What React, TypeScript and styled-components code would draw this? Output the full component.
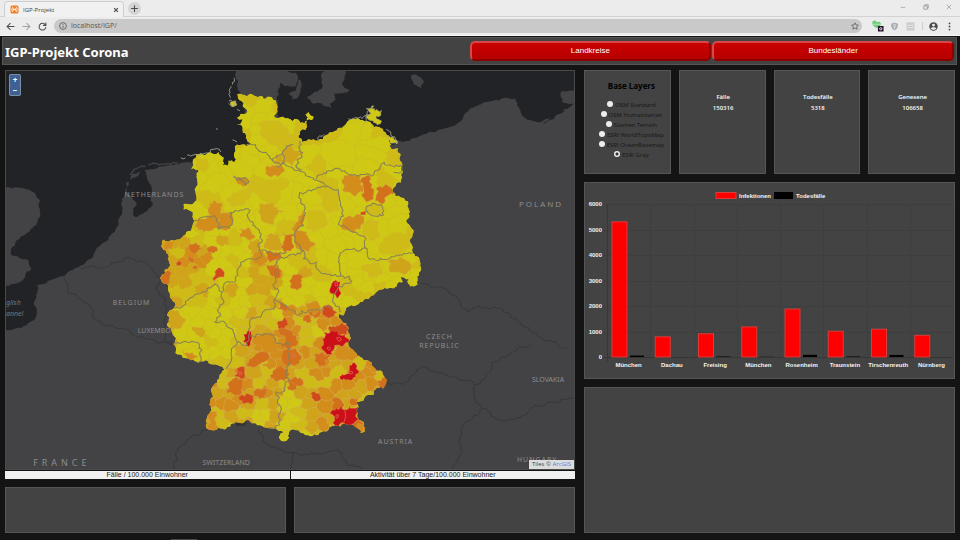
import React, { useState } from "react";
import styled, { createGlobalStyle, css } from "styled-components";

const Global = createGlobalStyle`
  * { box-sizing: border-box; }
  body { margin: 0; background: #141414; font-family: "Open Sans", "Noto Sans", sans-serif; }
  button, input { font: inherit; }
`;

/* ---------- geometry helpers for the map ---------- */

type Pt = [number, number];

const pts = (s: string): Pt[] =>
  s.trim().split(/\s+/).map((p) => p.split(",").map(Number) as Pt);

const noise = (a: number, b: number) => {
  const v = Math.sin(a * 12.9898 + b * 78.233) * 43758.5453;
  return v - Math.floor(v);
};

/* Splits an edge into small wobbling pieces; the same edge always gets the same wobble. */
const roughEdge = (a: Pt, b: Pt, amp: number, out: Pt[]) => {
  const len = Math.hypot(a[0] - b[0], a[1] - b[1]);
  if (len < 9) {
    out.push(b);
    return;
  }
  const n = noise(Math.round(a[0] + b[0]), Math.round(a[1] + b[1])) - 0.5;
  const dir = a[0] < b[0] || (a[0] === b[0] && a[1] < b[1]) ? 1 : -1;
  const k = n * dir * Math.min(amp, 12 / len);
  const m: Pt = [
    (a[0] + b[0]) / 2 - (b[1] - a[1]) * k,
    (a[1] + b[1]) / 2 + (b[0] - a[0]) * k,
  ];
  roughEdge(a, m, amp, out);
  roughEdge(m, b, amp, out);
};

const toPath = (points: Pt[], amp = 0.6, closed = true) => {
  const out: Pt[] = [points[0]];
  for (let i = 1; i < points.length; i++) roughEdge(points[i - 1], points[i], amp, out);
  if (closed) roughEdge(points[points.length - 1], points[0], amp, out);
  return "M" + out.map((p) => `${Math.round(p[0])},${Math.round(p[1])}`).join("L") + (closed ? "Z" : "");
};

const HEAT = ["#cfc814", "#cebb18", "#d0a41a", "#d38d1a", "#d2701c", "#d04a1c", "#cc101a"];

const GERMANY = pts(`641,84 655,86 690,90 712,98 722,92 745,103 750,120 748,140 740,150 765,152 790,165 805,160 812,170
 830,164 826,145 834,138 840,148 848,152 846,160 836,160 830,182 825,192 812,195 808,215 818,228 835,220 860,224 880,208
 905,195 925,185 940,166 975,162 995,166 1012,184 1030,186 1045,205 1055,232 1076,242 1083,285 1090,320 1085,350 1066,365
 1062,378 1085,395 1105,415 1103,460 1115,490 1110,530 1117,562 1133,575 1137,600 1130,645 1120,663 1104,655 1106,640
 1084,635 1090,650 1060,668 1035,672 1010,690 975,710 950,720 935,735 930,750 918,745 925,768 942,785 945,805 942,830
 945,845 965,865 995,885 1010,905 1040,935 1045,955 1038,970 1020,968 1010,990 985,1000 963,1010 970,1025 962,1038
 968,1058 985,1078 987,1100 975,1104 966,1090 955,1080 920,1085 890,1088 868,1102 850,1108 838,1114 820,1105 800,1096
 784,1097 782,1118 765,1130 754,1114 766,1102 745,1090 715,1088 690,1075 672,1066 650,1080 630,1075 610,1092 590,1088
 570,1096 557,1090 558,1060 565,1020 572,985 580,955 592,935 606,914 600,905 575,898 555,885 535,893 515,885 490,870
 468,838 475,820 462,795 450,775 450,750 458,735 470,725 462,700 455,680 448,655 430,637 445,622 455,605 452,580 447,555
 437,535 440,522 470,525 495,510 515,495 524,466 520,440 495,432 495,415 520,415 530,400 525,370 530,335 535,312
 516,310 520,285 528,265 560,262 590,258 604,275 601,298 614,300 617,284 632,290 635,250 640,236 665,240 678,234 664,215 655,185
 640,175 655,160 640,155 665,142 655,120 652,105`);

const LAND = [
  `-40,795 13,794 40,790 70,780 88,765 97,740 95,700 97,660 130,645 170,632 210,605 245,580 262,545 290,525 300,505 318,470 330,430
   335,390 340,350 355,325 375,318 395,312 430,302 480,295 515,290 560,300 700,300 690,200 648,100 640,60 643,5 780,5 765,40
   752,70 748,100 750,140 780,260 1000,270 1070,240 1060,230 1090,228 1120,215 1190,190 1240,170 1255,145 1285,122 1330,105
   1370,95 1395,97 1405,125 1412,145 1435,162 1470,164 1500,150 1525,130 1560,110 1600,110 1600,1300 -40,1300`,
  `-40,365 13,365 50,366 85,378 105,402 106,450 80,490 55,512 30,545 28,568 45,572 75,585 82,610 62,640 48,652 13,662 -40,662`,
  `1520,75 1600,78 1600,105 1522,108`,
  `752,30 770,12 800,20 805,45 795,62 770,60 755,48`,
  `830,92 870,68 868,30 885,8 935,8 925,55 945,72 905,82 908,100 892,112 898,128 870,112 845,112`,
  `780,82 800,72 808,40 815,60 806,95 790,100`,
  `1112,28 1125,25 1147,45 1140,68 1120,55`,
];
const LAKES = [
  `345,345 372,330 388,312 398,345 408,362 400,392 412,418 390,440 366,455 357,445 368,412 348,388`,
  `1470,175 1492,150 1530,130 1525,138 1500,158`,
  `1400,100 1412,98 1425,118 1430,128`,
];
const COUNTRY_LINES = [
  `170,632 180,680 240,720 262,765 320,790 380,815 465,838`,
  `215,608 270,605 310,590 345,575 390,590 420,625 432,637`,
  `432,637 420,670 445,700 450,750 442,790 450,830 468,838`,
  `557,1095 520,1110 480,1160 465,1216`,
  `700,1090 710,1130 750,1150 790,1165 830,1170 915,1155 935,1190 990,1216`,
  `790,1165 785,1216`,
  `1137,650 1180,665 1240,700 1265,740 1290,725 1340,725 1400,760 1440,800 1535,850`,
  `1045,955 1090,960 1135,910 1180,920 1240,940 1285,960 1340,890 1400,850 1440,840`,
  `1285,960 1285,1010 1305,1030 1250,1090 1245,1150 1225,1216`,
  `1305,1030 1360,1070 1420,1050 1450,1020 1554,1000`,
];

const STATE_LINES = [
  `665,238 690,236 710,260 730,278 748,290 765,290 790,305 810,312 840,335 860,345`,
  `812,225 808,245 818,260 805,280 800,300 815,312`,
  `735,285 748,268 762,264 768,290 745,300`,
  `762,264 775,240 792,235`,
  `855,340 890,315 920,310 965,330 1010,328 1040,290 1060,300 1085,298 1080,322 1065,320`,
  `860,345 885,362 915,372 920,420 925,440 920,480 955,500 990,520 993,550`,
  `885,362 845,372 810,380 812,410 825,430 820,480 798,500 805,535 820,555 820,580 855,590 862,615 895,630 918,632`,
  `918,632 915,590 920,562 945,552 993,550 1000,582 1040,582 1080,570 1117,562`,
  `918,632 945,632 950,650 925,665 900,700 905,715 920,740`,
  `820,555 775,575 748,585 750,610 745,630 740,655 750,670 742,700 755,710 790,735 808,750 815,735 850,735 875,725 900,728`,
  `524,466 545,455 580,450 590,490 620,488 628,465 622,440 650,433 675,435 672,460 690,485 705,520 700,555 745,570 775,560`,
  `702,560 705,575 680,580 650,590 640,620 630,650 605,655 600,680 580,655 555,680 510,700 495,720 470,728`,
  `600,680 605,710 590,730 595,750 580,770 610,775 630,800 640,830 655,840`,
  `742,700 740,730 710,740 705,755 675,765 675,800 668,840 655,840`,
  `640,830 625,850 625,885 610,912`,
  `468,838 500,828 525,830 545,855 535,890`,
  `675,812 690,816 700,806 740,808 750,835 775,830 780,870 775,910 782,945 770,965 760,985 745,980 755,1020 755,1080 725,1090`,
  `990,432 1008,412 1035,425 1037,448 1000,445 990,432`,
  `632,330 668,342 664,358 640,342 632,330`,
];

const ISLANDS = [
  `625,60 618,85 622,95`, `632,35 628,55`, `618,105 634,112 626,122 618,112`, `640,130 648,134`, `628,222 640,228`,
  `505,268 540,262 592,250`, `488,276 500,276`, `583,188 588,190`, `592,250 596,258`,
  `942,158 970,156 985,150 1000,150`, `985,170 1000,128 1012,120`,
  `1045,190 1060,212 1072,235`, `860,222 876,205`,
];
const DUTCH_ISLANDS = [`350,328 368,308 392,302`, `400,298 440,294 480,290`];
const RUEGEN = [
  `990,128 1008,118 1014,134 1032,132 1030,148 1018,150 1032,165 1020,176 1002,164 990,152 1004,142`,
  `1050,208 1064,214 1074,234 1054,230`,
  `622,108 636,104 640,116 628,122`,
];

/* Districts with a shape of their own: heat level, then outline. */
const DISTRICTS: [number, string][] = [
  [2, `770,240 790,236 800,255 818,262 806,282 790,300 768,290 762,265`],
  [2, `735,285 750,268 766,270 766,290 748,300`],
  [3, `722,300 760,298 768,318 750,334 725,330 718,312`],
  [3, `640,338 668,342 666,358 650,356`],
  [3, `565,412 580,404 598,412 594,440 605,445 590,462 592,492 560,496 525,480 540,460 566,450`],
  [3, `592,450 620,440 630,460 618,488 596,490`],
  [1, `700,170 740,165 775,185 790,210 765,230 720,215 700,200`],
  [1, `640,380 672,368 676,390 660,415 630,420 612,400`],
  [2, `700,418 740,415 765,440 745,450 738,476 712,468 698,440`],
  [3, `645,490 670,485 690,515 675,525 650,515`],
  [2, `672,528 695,520 700,555 680,565 670,545`],
  [2, `720,510 750,505 760,545 730,556 712,540`],
  [3, `815,440 826,450 822,480 800,500 785,490 800,470`],
  [3, `798,500 830,498 852,540 835,558 808,550 795,530`],
  [4, `765,500 792,505 795,545 770,560 758,545 768,525`],
  [4, `718,562 760,556 752,580 728,592`],
  [3, `685,562 712,558 718,590 700,600 684,590`],
  [4, `722,598 745,595 760,630 748,640 728,620`],
  [1, `880,375 915,376 918,430 895,440 870,415`],
  [1, `830,440 870,435 880,480 850,500 828,485`],
  [3, `930,330 975,332 982,380 960,392 930,378`],
  [4, `980,335 1000,330 1012,370 1010,400 990,408 978,385`],
  [4, `1018,370 1045,355 1068,372 1045,392 1035,415 1015,405`],
  [1, `990,430 1008,412 1035,425 1037,446 1005,445`],
  [3, `928,460 975,448 985,465 960,500 930,492`],
  [5, `975,440 990,435 988,448 976,448`],
  [1, `990,470 1020,465 1030,510 1000,520 980,500`],
  [1, `980,600 1020,590 1035,625 1000,635`],
  [2, `1050,590 1085,575 1112,600 1090,625 1055,620`],
  [4, `788,640 800,628 818,635 815,655 802,675 785,660`],
  [6, `897,655 908,644 920,650 922,682 910,698 895,685`],
  [4, `512,535 530,532 545,550 520,562`],
  [4, `558,548 585,545 588,556 564,560`],
  [4, `510,572 522,578 520,592 512,588`],
  [5, `477,590 487,588 486,600 478,600`],
  [4, `520,602 534,604 528,612 520,608`],
  [5, `585,612 596,608 606,622 604,635 590,636 580,650 574,640 582,628`],
  [4, `430,637 448,618 466,624 456,645 445,658`],
  [3, `440,524 468,530 462,552 448,556`],
  [4, `752,706 778,728 775,742 750,730`],
  [5, `752,768 770,755 780,780 768,795 752,780`],
  [4, `755,790 790,800 805,830 785,860 762,848 770,820`],
  [3, `828,712 862,714 872,735 845,748 828,735`],
  [5, `872,726 895,722 912,742 890,758 872,745`],
  [4, `822,752 846,756 840,770 820,768`],
  [6, `658,808 668,798 680,812 676,838 666,842 656,828`],
  [5, `892,782 925,772 944,792 938,808 900,805 890,795`],
  [6, `875,803 895,797 932,808 944,832 915,842 905,840 898,868 880,862 868,845 872,822`],
  [4, `850,868 875,862 895,872 880,898 860,902`],
  [3, `905,842 942,838 945,862 920,885 902,868`],
  [6, `945,900 962,897 970,918 962,935 940,943 920,942 918,935 935,928`],
  [4, `765,855 800,850 815,880 795,902 768,895`],
  [4, `690,868 722,855 735,875 705,895 678,905 665,895`],
  [5, `640,910 660,905 662,930 650,940 632,932`],
  [4, `630,940 658,948 650,975 640,990 615,985 618,965`],
  [4, `752,905 778,912 780,942 755,945 730,930`],
  [3, `690,808 740,808 750,835 745,865 710,850 680,840`],
  [5, `650,992 665,985 684,1000 678,1018 655,1015`],
  [4, `692,972 716,970 714,998 700,1004 684,990`],
  [4, `775,950 804,958 800,974 780,975`],
  [5, `840,985 862,984 868,1000 850,1008`],
  [4, `950,998 972,996 968,1018 950,1020`],
  [6, `890,1045 910,1030 925,1024 938,1035 945,1022 968,1026 965,1045 970,1062 950,1080 925,1072 905,1085 905,1060`],
  [3, `560,1042 588,1040 585,1075 565,1094`],
  [3, `968,1075 985,1080 986,1100 972,1100`],
  [3, `490,858 520,862 535,875 515,885`],
  [2, `450,742 480,735 500,760 480,790 462,792 450,775`],
];

/* Bavaria and the south-west are warmer, the Rhine-Ruhr a little. */
const baseHeat = (x: number, y: number) => {
  const r = noise(x * 1.3, y * 0.7);
  if (y > 1035 && x > 590 && x < 820) return r < 0.6 ? 0 : 1 + (r > 0.8 ? 1 : 0);
  if (x > 755 && x < 840 && y > 965) return r < 0.7 ? 0 : 2;
  if (x > 800 && x < 860 && y > 760 && y < 850) return r < 0.7 ? 1 : 0;
  if (y > 900 || (y > 830 && x > 640) || (y > 735 && x > 760)) return r < 0.15 ? 1 : r < 0.55 ? 2 : r < 0.92 ? 3 : 4;
  if (y > 500 && y < 730 && x < 570) return r < 0.3 ? 1 : r < 0.88 ? 2 : 3;
  if (y > 560 && x > 670 && x < 745) return r < 0.4 ? 1 : 2;
  if (y < 480 || x > 840) return r < 0.75 ? 0 : 1;
  return r < 0.62 ? 0 : r < 0.9 ? 1 : 2;
};

const buildCells = () => {
  const sites: Pt[] = [];
  for (let row = 0, y = 90; y < 1140; y += 31, row++)
    for (let x = 430 + (row % 2) * 17; x < 1145; x += 34) {
      const sparse = y < 480 || (x > 840 && y < 700);
      if (sparse && noise(x, y + 3) > 0.42) continue;
      sites.push([x + (noise(x, y) - 0.5) * 24, y + (noise(y, x) - 0.5) * 22]);
    }
  return sites.map((s) => {
    let cell: Pt[] = [[s[0] - 110, s[1] - 110], [s[0] + 110, s[1] - 110], [s[0] + 110, s[1] + 110], [s[0] - 110, s[1] + 110]];
    for (const o of sites) {
      const dx = o[0] - s[0];
      const dy = o[1] - s[1];
      if ((!dx && !dy) || Math.hypot(dx, dy) > 240) continue;
      const mid = (dx * (s[0] + o[0]) + dy * (s[1] + o[1])) / 2;
      const side = (p: Pt) => p[0] * dx + p[1] * dy - mid;
      const next: Pt[] = [];
      cell.forEach((p, i) => {
        const q = cell[(i + 1) % cell.length];
        const a = side(p);
        const b = side(q);
        if (a <= 0) next.push(p);
        if (a < 0 !== b < 0) next.push([p[0] + ((q[0] - p[0]) * a) / (a - b), p[1] + ((q[1] - p[1]) * a) / (a - b)]);
      });
      cell = next;
    }
    return { d: toPath(cell, 0.6), heat: baseHeat(s[0], s[1]), south: s[1] > 740 && (s[0] > 640 || s[1] > 900) };
  });
};

const CELLS = buildCells();
const GERMANY_PATH = toPath(GERMANY, 0.6);

const LABELS: [string, number, number, number, number][] = [
  ["NETHERLANDS", 154, 197, 7, 1],
  ["BELGIUM", 131, 306, 7, 1],
  ["POLAND", 542, 207, 8, 2],
  ["CZECH", 440, 340, 7, 1],
  ["REPUBLIC", 440, 349, 7, 1],
  ["SLOVAKIA", 549, 383, 7, 0],
  ["AUSTRIA", 396, 445, 7, 1],
  ["HUNGARY", 538, 463, 7, 1],
  ["SWITZERLAND", 226, 466, 7, 0],
  ["FRANCE", 61, 467, 9, 4],
];

const MapSvg = styled.svg`
  display: block;
  position: absolute;
  inset: 0;
  width: 100%;
  height: 100%;
  background: #222327;
`;
const Place = styled.text<{ $size: number; $space: number }>`
  font: ${(p) => p.$size}px "Noto Sans", sans-serif;
  letter-spacing: ${(p) => p.$space}px;
  fill: #8d8d8f;
  text-anchor: middle;
`;
const SeaName = styled.text`
  font: italic 7px "Noto Sans", sans-serif;
  fill: #77777a;
`;

const GermanyMap = () => (
  <MapSvg viewBox="5 70 570 401" preserveAspectRatio="xMidYMid slice" role="img" aria-label="Fälle pro Landkreis">
    <defs>
      <clipPath id="germany"><path d={GERMANY_PATH} /></clipPath>
    </defs>
    <g transform="translate(0 66) scale(0.37 0.33333)" strokeLinejoin="round">
      {LAND.map((l) => <path key={l} d={toPath(pts(l), 0.35)} fill="#434345" />)}
      {LAKES.map((l) => <path key={l} d={toPath(pts(l), 0.4)} fill="#222327" />)}
      {DUTCH_ISLANDS.map((l) => <path key={l} d={toPath(pts(l), 0.4, false)} fill="none" stroke="#434345" strokeWidth="4" />)}
      {COUNTRY_LINES.map((l) => (
        <path key={l} d={toPath(pts(l), 0.6, false)} fill="none" stroke="#39393c" strokeWidth="3" />
      ))}
    </g>
    <Place x={161} y={334} $size={7} $space={0}>LUXEMBOURG</Place>
    <g transform="translate(0 66) scale(0.37 0.33333)" strokeLinejoin="round">
      <g clipPath="url(#germany)">
        <path d={GERMANY_PATH} fill={HEAT[0]} />
        {CELLS.map((c, i) => (
          <path key={i} d={c.d} fill={HEAT[c.heat]} stroke={c.south ? "#d8ae68" : "#cdb838"} strokeOpacity={c.south ? 0.7 : 0.45} strokeWidth="1.5" />
        ))}
        {DISTRICTS.map(([h, l]) => (
          <path key={l} d={toPath(pts(l), 0.8)} fill={HEAT[h]} stroke="#d8a070" strokeOpacity="0.55" strokeWidth="1.5" />
        ))}
        <g fill="none" stroke="#e8705c" strokeWidth="2">
          <path d="M910,818l8,-2 6,8 -8,4zM884,848l6,-3 5,5 -6,5zM944,920l8,-2 2,7 -8,2zM905,652l6,-2 2,10 -6,2zM644,922l7,-3 3,7 -7,3zM788,868l8,-3 5,8 -8,5zM908,1052l6,-4 2,8 -6,4zM932,1032l3,22 -5,18" />
        </g>
      </g>
      {RUEGEN.map((l) => <path key={l} d={toPath(pts(l), 0.9)} fill={HEAT[0]} stroke="#aaa775" strokeWidth="1.5" />)}
      {STATE_LINES.map((l) => (
        <path key={l} d={toPath(pts(l), 0.7, false)} fill="none" stroke="#8a8256" strokeWidth="3" />
      ))}
      {ISLANDS.map((l) => <path key={l} d={toPath(pts(l), 0.7, false)} fill="none" stroke="#a3a38c" strokeWidth="2.5" />)}
      <path d="M668,1066l-12,10 -22,-4 6,12 22,-2z" fill="#343438" />
      <path d="M1054,238l22,-4 2,12 -18,4z" fill="#434345" />
    </g>
    {LABELS.map(([name, x, y, size, space]) => (
      <Place key={name} x={x} y={y} $size={size} $space={space}>{name}</Place>
    ))}
    <SeaName x={5} y={306}>glish</SeaName>
    <SeaName x={5} y={317}>annel</SeaName>
  </MapSvg>
);

/* ---------- browser frame ---------- */

const Shell = styled.div`
  display: flex;
  flex-direction: column;
  min-height: 100vh;
  background: #141414;
`;
const TabStrip = styled.div`
  display: flex;
  align-items: flex-end;
  height: 17px;
  padding-left: 4px;
  background: #ececec;
  border-bottom: 1px solid #d2d2d2;
`;
const Tab = styled.div`
  display: flex;
  align-items: center;
  gap: 4px;
  width: 120px;
  height: 16px;
  padding: 0 4px 0 5px;
  margin-bottom: -1px;
  background: #f1f1f1;
  border: 1px solid #cfcfcf;
  border-bottom: 0;
  border-radius: 4px 4px 0 0;
  font-size: 6px;
  color: #444;
  svg { width: 9px; height: 9px; }
`;
const Grow = styled.span`
  flex: 1;
`;
const IconButton = styled.button<{ $round?: boolean }>`
  display: flex;
  align-items: center;
  justify-content: center;
  flex: none;
  width: 13px;
  height: 13px;
  padding: 0;
  border: 0;
  border-radius: 50%;
  color: #4a4a4a;
  background: ${(p) => (p.$round ? "#d4d4d4" : "transparent")};
  svg { width: 9px; height: 9px; }
`;
const TabClose = styled(IconButton)`
  width: 7px;
  svg { width: 6px; height: 6px; }
`;
const NewTab = styled(IconButton)`
  margin: 0 0 1px 4px;
`;
const WindowButtons = styled.div`
  display: flex;
  align-self: flex-start;
  gap: 10px;
  padding-right: 5px;
  button { color: #858585; }
  svg { width: 6px; height: 6px; }
`;
const AddressBar = styled.div`
  display: flex;
  align-items: center;
  gap: 3px;
  height: 19px;
  padding: 0 4px;
  background: #ececec;
  border-bottom: 1px solid #f8f8f8;
`;
const Omnibox = styled.label`
  display: flex;
  align-items: center;
  flex: 1;
  gap: 4px;
  height: 14px;
  margin: 0 7px 0 2px;
  padding: 0 3px 0 5px;
  border-radius: 7px;
  background: #c9c9c9;
  color: #555;
  svg { width: 8px; height: 8px; }
`;
const UrlInput = styled.input`
  flex: 1;
  min-width: 0;
  padding: 0;
  border: 0;
  outline: 0;
  background: transparent;
  color: #555;
  font-size: 7px;
  line-height: 12px;
`;

const stroke = { fill: "none", stroke: "currentColor", strokeWidth: 1.8, viewBox: "0 0 16 16" } as const;

const BrowserFrame = () => (
  <>
    <TabStrip>
      <Tab>
        <svg viewBox="0 0 18 18">
          <rect x="1" y="1" width="16" height="16" rx="3" fill="#f27f22" />
          <path d="M6 4c-3 2-3 8 0 10M12 4c3 2 3 8 0 10M5 6l8 6M13 6l-8 6M6 9h6" stroke="#fff" strokeWidth="1.6" fill="none" />
        </svg>
        IGP-Projekt
        <Grow />
        <TabClose aria-label="Tab schließen">
          <svg {...stroke} strokeWidth={3}><path d="M3 3l10 10M13 3L3 13" /></svg>
        </TabClose>
      </Tab>
      <NewTab $round aria-label="Neuer Tab"><svg {...stroke}><path d="M8 2v12M2 8h12" /></svg></NewTab>
      <Grow />
      <WindowButtons>
        <IconButton aria-label="Minimieren"><svg {...stroke} strokeWidth={1.5}><path d="M2 9h12" /></svg></IconButton>
        <IconButton aria-label="Verkleinern"><svg {...stroke} strokeWidth={1.8}><path d="M2 5h9v9H2zM5 5V2h9v9h-3" /></svg></IconButton>
        <IconButton aria-label="Schließen"><svg {...stroke} strokeWidth={1.6}><path d="M2 2l12 12M14 2L2 14" /></svg></IconButton>
      </WindowButtons>
    </TabStrip>
    <AddressBar>
      <IconButton aria-label="Zurück"><svg {...stroke}><path d="M15 8H2M8 2L2 8l6 6" /></svg></IconButton>
      <IconButton aria-label="Vorwärts" disabled><svg {...stroke} opacity=".45"><path d="M1 8h13M8 2l6 6-6 6" /></svg></IconButton>
      <IconButton aria-label="Neu laden"><svg {...stroke}><path d="M13 5a6 6 0 1 0 1 4M14 1v5H9" /></svg></IconButton>
      <Omnibox>
        <svg {...stroke} strokeWidth={1.6}><circle cx="8" cy="8" r="6.8" /><path d="M8 7v5M8 4v1.6" /></svg>
        <UrlInput aria-label="Adresse" defaultValue="localhost/IGP/" />
        <svg {...stroke} strokeWidth={1.5}><path d="M8 1.5l2 4.4 4.8.5-3.6 3.2 1 4.8L8 12l-4.2 2.4 1-4.8L1.2 6.400 6 5.9z" /></svg>
      </Omnibox>
      <IconButton aria-label="Erweiterung">
        <svg viewBox="0 0 16 16" overflow="visible">
          <path d="M-3 2a4 4 0 0 1 8-1 4 4 0 0 1 7 1c1 4-4 7-6 9C3 10-3 6-3 2z" fill="#6ecb78" />
          <path d="M-2 4h13" stroke="#b8edbc" strokeWidth="1.5" />
          <rect x="7" y="7" width="10" height="10" rx="1" fill="#241128" />
          <circle cx="12" cy="12" r="2" fill="none" stroke="#fff" strokeWidth="1.5" />
        </svg>
      </IconButton>
      <IconButton aria-label="Schutz">
        <svg viewBox="0 0 16 16"><path d="M8 1l6 2c0 6-1 9-6 12C3 12 2 9 2 3z" fill="#a9abb0" /><path d="M8 4a2 2 0 1 0 .1 0M8 8v4" stroke="#eee" strokeWidth="1.5" fill="none" /></svg>
      </IconButton>
      <IconButton aria-label="Leser"><svg {...stroke} opacity=".25"><path d="M2 2h12v12H2zM4 5h8M4 8h8M4 11h8" /></svg></IconButton>
      <svg width="4" height="10" viewBox="0 0 4 10"><path d="M2.500 1v8" stroke="#ccc" /></svg>
      <IconButton aria-label="Profil">
        <svg viewBox="0 0 16 16"><circle cx="8" cy="8" r="7.5" fill="#4a4a4a" /><circle cx="8" cy="5.5" r="2.6" fill="#eee" /><path d="M3 11.5c2-3 8-3 10 0-2 3-8 3-10 0z" fill="#eee" /></svg>
      </IconButton>
      <IconButton aria-label="Menü"><svg viewBox="0 0 16 16" fill="#4a4a4a"><circle cx="8" cy="2.5" r="1.6" /><circle cx="8" cy="8" r="1.6" /><circle cx="8" cy="13.5" r="1.6" /></svg></IconButton>
    </AddressBar>
  </>
);

/* ---------- dashboard ---------- */

const surface = css`
  background: #434343;
  border: 1px solid #565656;
`;
const Header = styled.header`
  ${surface}
  display: grid;
  grid-template-columns: 465fr 485fr;
  align-items: center;
  height: 28px;
  margin: 1px 3px 0 2px;
  padding: 0 2px;
`;
const Title = styled.h1`
  margin: 0;
  padding-top: 2px;
  color: #fff;
  font: bold 13px "Noto Sans", sans-serif;
  line-height: 18px;
`;
const Switch = styled.nav`
  display: flex;
  gap: 1px;
`;
const RedButton = styled.button`
  flex: 1;
  height: 20px;
  padding: 0 0 2px;
  border: 2px solid;
  border-color: #d84848 #8e0000 #8e0000 #d84848;
  border-radius: 5px;
  background: linear-gradient(#cb0000, #b60000);
  color: #fff;
  font: 8px "Liberation Sans", Arial, sans-serif;
`;
const Main = styled.main`
  flex: 1;
  display: grid;
  grid-template-columns: 570fr 371fr;
  gap: 9px;
  padding: 5px 5px 6px;
`;
const Column = styled.div`
  display: flex;
  flex-direction: column;
  gap: 8px;
  min-width: 0;
`;
const MapPanel = styled.section`
  flex: 1;
  display: flex;
  flex-direction: column;
`;
const MapView = styled.div`
  position: relative;
  flex: 1;
  min-height: 200px;
  overflow: hidden;
  border: 1px solid #4a4a4a;
`;
const ZoomControl = styled.div`
  position: absolute;
  top: 3px;
  left: 3px;
  display: grid;
  padding: 1px;
  border-radius: 2px;
  background: #7c8ea3;
`;
const ZoomButton = styled.button`
  width: 10px;
  height: 10px;
  padding: 0;
  border: 0;
  border-radius: 1px;
  background: #3f6092;
  color: #fff;
  font-size: 8px;
  font-weight: 700;
  line-height: 8px;
`;
const Attribution = styled.div`
  position: absolute;
  right: 0;
  bottom: 0;
  padding: 0 3px;
  background: #dcdcdc;
  color: #444;
  font-size: 6px;
  line-height: 9px;
  a { color: #3b87d8; text-decoration: none; }
`;
const LegendStrip = styled.div`
  display: grid;
  grid-template-columns: 1fr 1fr;
  gap: 1px;
  margin-top: 1px;
`;
const LegendTab = styled.button`
  height: 8px;
  padding: 0;
  border: 0;
  background: #f0f0f0;
  color: #222;
  font: 7px "Liberation Sans", Arial, sans-serif;
  line-height: 8px;
`;
const PanelRow = styled.div<{ $cols: number }>`
  display: grid;
  grid-template-columns: repeat(${(p) => p.$cols}, 1fr);
  gap: 8px;
`;
const Panel = styled.section<{ $height?: number; $grow?: boolean }>`
  ${surface}
  ${(p) => p.$height && `min-height: ${p.$height}px;`}
  ${(p) => p.$grow && "flex: 1;"}
`;
const StatCard = styled(Panel)`
  padding: 21px 0 0 2px;
  color: #fff;
  font-size: 6px;
  font-weight: 600;
  line-height: 11px;
  text-align: center;
  p { margin: 0; }
`;
const LayerCard = styled(Panel)`
  padding: 7px 0 0 8px;
  text-align: center;
  color: #161616;
`;
const LayerTitle = styled.h2`
  margin: 0 0 7px;
  color: #000;
  font-size: 8px;
  line-height: 15px;
`;
const LayerOption = styled.label`
  display: flex;
  align-items: center;
  justify-content: center;
  gap: 2px;
  font-size: 6px;
  line-height: 10px;
  white-space: nowrap;
`;
const Radio = styled.input`
  appearance: none;
  flex: none;
  width: 6px;
  height: 6px;
  margin: 0 0 2px;
  border: 0;
  border-radius: 50%;
  background: #ededed;
  &:checked { background: radial-gradient(circle, #333 0 1px, #ededed 2px); }
`;
const ChartSvg = styled.svg`
  display: block;
  width: 100%;
  height: auto;
`;
const ChartText = styled.text<{ $anchor?: string }>`
  font: bold 6px "Liberation Sans", Arial, sans-serif;
  fill: #f4f4f4;
  text-anchor: ${(p) => p.$anchor ?? "start"};
`;
const Grip = styled.div`
  width: 26px;
  height: 1px;
  margin-left: 171px;
  background: #4a4a4a;
`;

const LAYERS = ["OSM Standard", "OSM Humanitarian", "Stamen Terrain", "ESRI WorldTopoMap", "ESRI OceanBasemap", "ESRI Gray"];
const STATS: [string, string][] = [["Fälle", "150316"], ["Todesfälle", "5318"], ["Genesene", "106658"]];
const CITIES: [string, number, number][] = [
  ["München", 5300, 55], ["Dachau", 790, 0], ["Freising", 910, 20], ["München", 1180, 8],
  ["Rosenheim", 1880, 85], ["Traunstein", 1010, 20], ["Tirschenreuth", 1090, 80], ["Nürnberg", 850, 0],
];

const CasesChart = () => {
  const left = 22;
  const right = 368;
  const bottom = 175;
  const unit = 153 / 6000;
  const step = (right - left) / CITIES.length;
  return (
    <ChartSvg viewBox="0 1 369 195" role="img" aria-label="Infektionen und Todesfälle">
      {[0, 1, 2, 3, 4, 5, 6].map((n) => {
        const y = bottom - n * 1000 * unit;
        return (
          <g key={n}>
            <path d={`M${left - 5},${Math.round(y) + 0.5}H${right}`} stroke={n ? "#3e3e3e" : "#353535"} />
            <ChartText x={17} y={y + 2} $anchor="end">{n * 1000}</ChartText>
          </g>
        );
      })}
      {[...CITIES, null].map((_, i) => (
        <path key={i} d={`M${Math.round(left + i * step) + 0.5},22V180`} stroke={i ? "#3e3e3e" : "#383838"} />
      ))}
      {CITIES.map(([name, cases, deaths], i) => {
        const x = left + i * step;
        return (
          <g key={i}>
            <rect x={x + 5} y={bottom - cases * unit} width="15" height={cases * unit} fill="#ff0000" stroke="#d83c3c" />
            <rect x={x + 23} y={bottom - deaths * unit} width="14" height={deaths * unit} fill="#000" />
            <ChartText x={x + step / 2} y={185} $anchor="middle">{name}</ChartText>
          </g>
        );
      })}
      <rect x="131" y="10.5" width="20" height="6" fill="#ff0000" stroke="#d83c3c" />
      <ChartText x={154} y={16}>Infektionen</ChartText>
      <rect x="189" y="10" width="19" height="7" fill="#000" />
      <ChartText x={211} y={16}>Todesfälle</ChartText>
    </ChartSvg>
  );
};

export default function App() {
  const [layer, setLayer] = useState("ESRI Gray");
  return (
    <Shell>
      <Global />
      <BrowserFrame />
      <Header>
        <Title>IGP-Projekt Corona</Title>
        <Switch>
          <RedButton>Landkreise</RedButton>
          <RedButton>Bundesländer</RedButton>
        </Switch>
      </Header>
      <Main>
        <Column>
          <MapPanel>
            <MapView>
              <GermanyMap />
              <ZoomControl>
                <ZoomButton aria-label="Vergrößern">+</ZoomButton>
                <ZoomButton aria-label="Verkleinern">−</ZoomButton>
              </ZoomControl>
              <Attribution>Tiles © <a href="#arcgis">ArcGIS</a></Attribution>
            </MapView>
            <LegendStrip>
              <LegendTab>Fälle / 100.000 Einwohner</LegendTab>
              <LegendTab>Aktivität über 7 Tage/100.000 Einwohner</LegendTab>
            </LegendStrip>
          </MapPanel>
          <PanelRow $cols={2}>
            <Panel $height={46} />
            <Panel $height={46} />
          </PanelRow>
        </Column>
        <Column>
          <PanelRow $cols={4}>
            <LayerCard $height={104}>
              <LayerTitle>Base Layers</LayerTitle>
              {LAYERS.map((name) => (
                <LayerOption key={name}>
                  <Radio type="radio" name="layer" checked={layer === name} onChange={() => setLayer(name)} />
                  {name}
                </LayerOption>
              ))}
            </LayerCard>
            {STATS.map(([label, value]) => (
              <StatCard key={label} $height={104}>
                <p>{label}</p>
                <p>{value}</p>
              </StatCard>
            ))}
          </PanelRow>
          <Panel><CasesChart /></Panel>
          <Panel $grow />
        </Column>
      </Main>
      <Grip />
    </Shell>
  );
}
